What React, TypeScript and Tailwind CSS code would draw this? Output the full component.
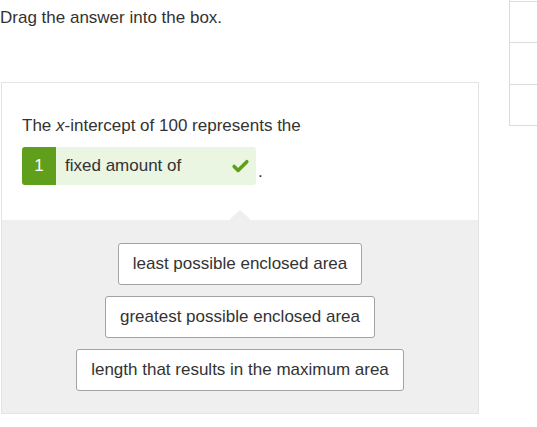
import { Check } from 'lucide-react';

const choices = [
  'least possible enclosed area',
  'greatest possible enclosed area',
  'length that results in the maximum area',
];

export default function App() {
  return (
    <div className="flex w-[537px] h-[427px] overflow-hidden bg-white text-[17px] text-[#333] font-['Liberation_Sans',Arial,sans-serif]">
      {/* Question column */}
      <div className="w-[479px] shrink-0">
        <p className="pt-[8px] leading-[20px]">Drag the answer into the box.</p>

        <div className="mt-[54px] ml-px w-[478px] border border-[#e4e4e4]">
          {/* Prompt */}
          <div className="px-[20px] pt-[33px] pb-[35px]">
            <p className="leading-[20px]">
              The <i>x</i>-intercept of 100 represents the
            </p>
            <div className="mt-[11px] flex items-end">
              <div className="flex h-[38px] w-[234px] overflow-hidden rounded-[3px] bg-[#eaf5e2]">
                <span className="flex w-[34px] items-center justify-center bg-[#5f9f1c] text-white">1</span>
                <span className="flex flex-1 items-center pl-[9px]">fixed amount of</span>
                <span className="flex items-center pr-[6px] text-[#5f9f1c]">
                  <Check size={19} strokeWidth={4.5} />
                </span>
              </div>
              <span className="pl-[2px] pb-[4px] leading-[18px]">.</span>
            </div>
          </div>

          {/* Answer bank */}
          <div className="relative flex flex-col items-center gap-[11px] bg-[#efefef] pt-[23px] pb-[22px]">
            <div className="absolute -top-[10px] left-1/2 -translate-x-1/2 border-x-[11px] border-b-[10px] border-x-transparent border-b-[#efefef]" />
            {choices.map((c) => (
              <div
                key={c}
                className="flex h-[42px] items-center rounded-[3px] border border-[#a3a3a3] bg-white px-[14px]"
              >
                {c}
              </div>
            ))}
          </div>
        </div>
      </div>

      {/* Side table, cut off at the edge */}
      <div className="ml-[30px] w-[60px] shrink-0">
        <div className="flex flex-col border-l border-[#dcdcdc]">
          <div className="h-[1px] bg-[#dcdcdc] mt-px" />
          <div className="h-[41px] border-b border-[#dcdcdc]" />
          <div className="h-[42px] border-b border-[#dcdcdc]" />
          <div className="h-[41px] border-b border-[#dcdcdc]" />
        </div>
      </div>
    </div>
  );
}
